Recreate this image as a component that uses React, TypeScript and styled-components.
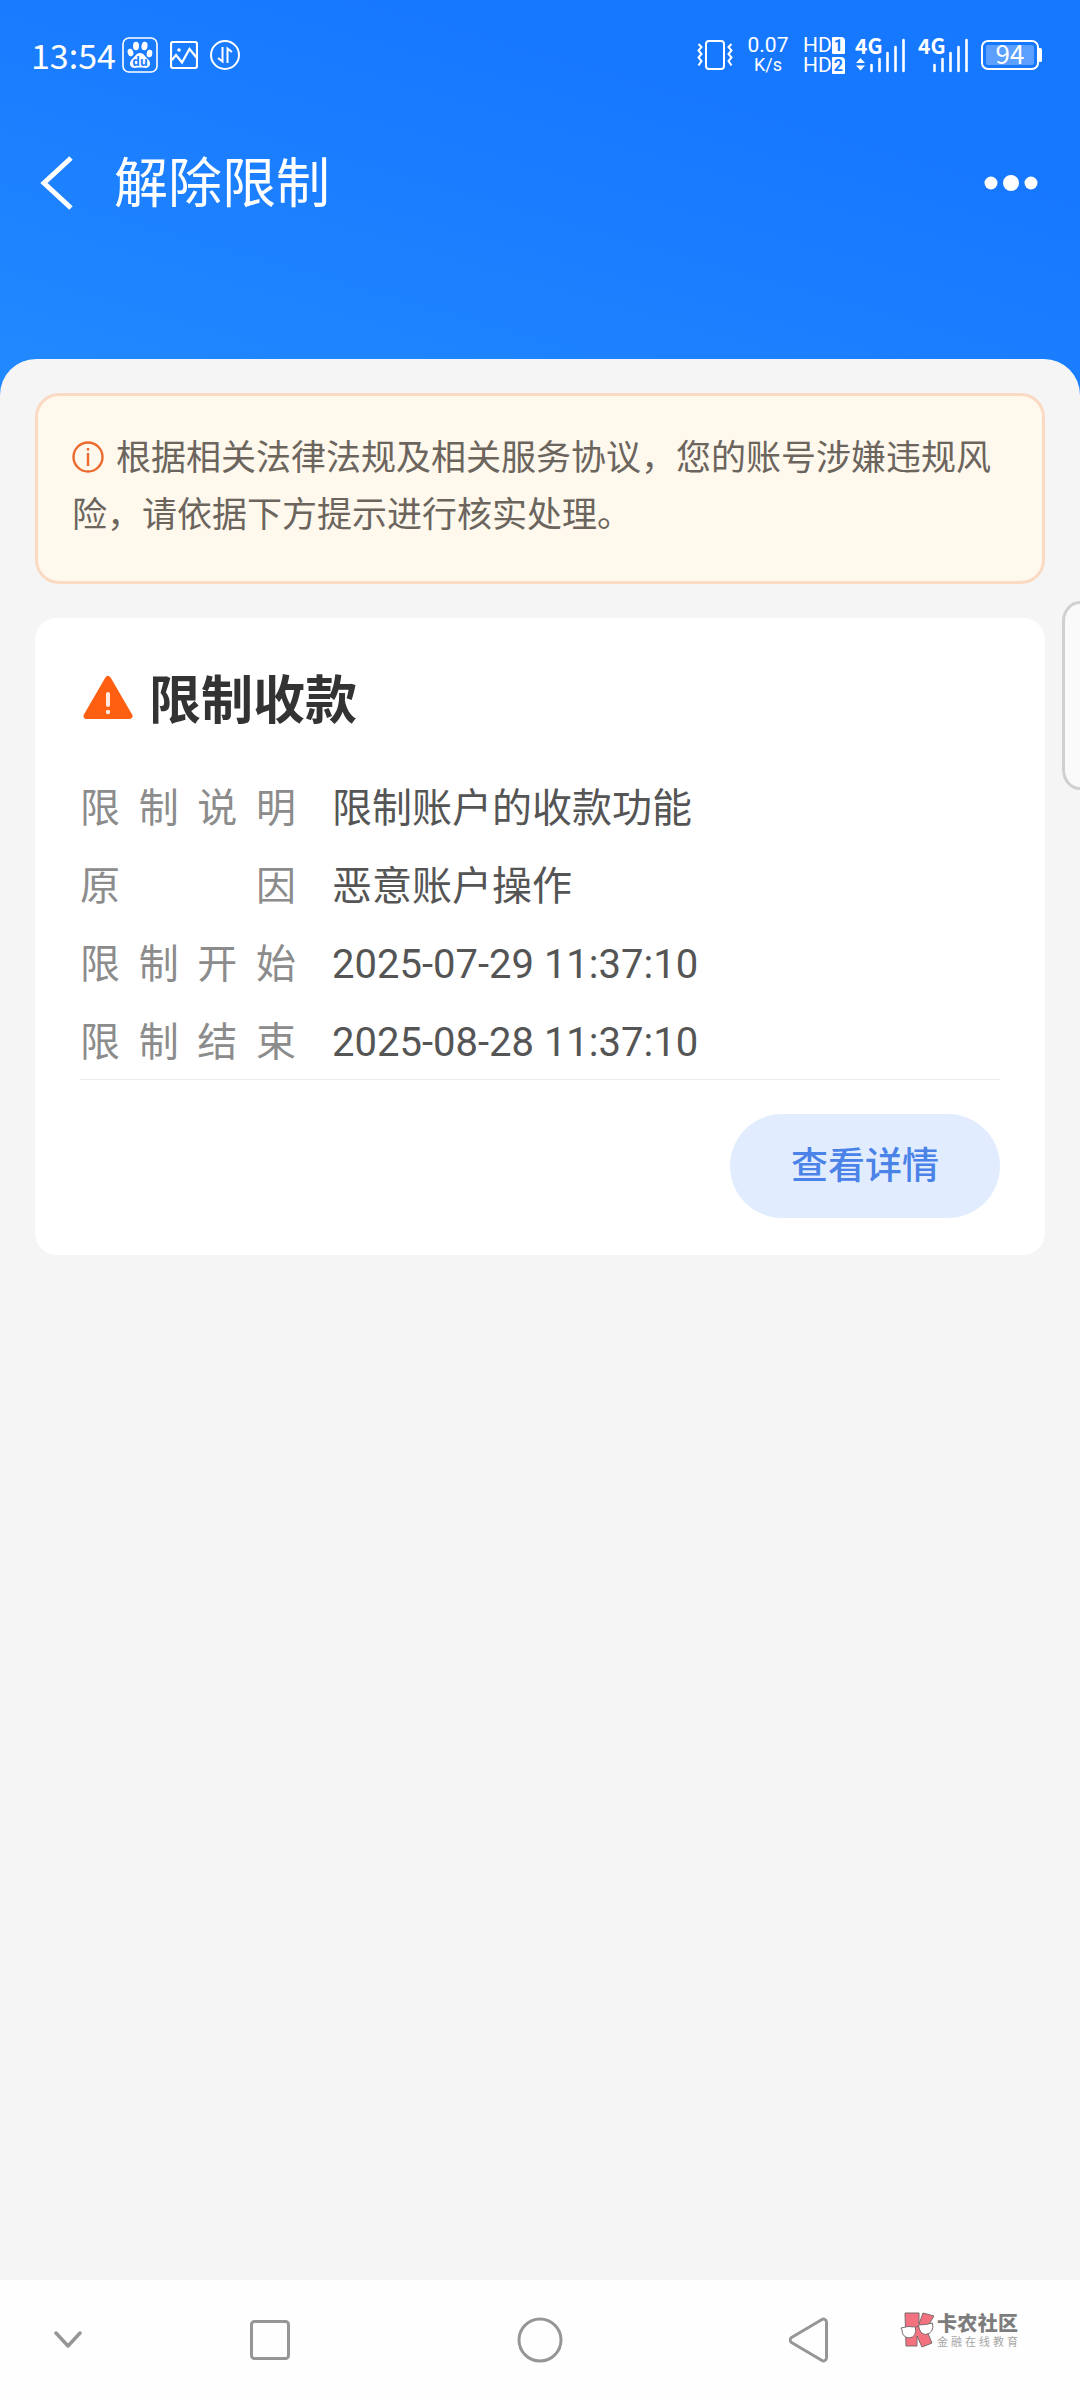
import React from "react";
import styled, { createGlobalStyle } from "styled-components";

const cjk = `"Noto Sans CJK SC", sans-serif`;

const GlobalStyle = createGlobalStyle`
  *, *::before, *::after { box-sizing: border-box; }
  body { margin: 0; font-family: Roboto, ${cjk}; background: #f5f5f5; }
  h1, h2, p, dl, dt, dd { margin: 0; }
  button { font: inherit; color: inherit; border: 0; padding: 0; background: none; cursor: pointer; }
  svg { display: block; flex: none; }
`;

const Page = styled.div`
  position: relative;
  display: flex;
  flex-direction: column;
  min-height: 100vh;
  overflow: hidden;
  background: #f5f5f5 linear-gradient(16deg, #228aff 0%, #1b7eff 45%, #1677ff 75%) no-repeat top / 100% 400px;
`;

const StatusBar = styled.div`
  display: flex;
  align-items: center;
  justify-content: space-between;
  height: 110px;
  padding: 0 38px 0 31px;
  color: #fff;
`;

const StatusGroup = styled.div<{ $gap: number }>`
  display: flex;
  align-items: center;
  gap: ${(p) => p.$gap}px;
`;

const Time = styled.span`
  font-family: ${cjk};
  font-size: 34px;
  line-height: 50px;
`;

const StatusStack = styled.div`
  display: grid;
  justify-items: center;
  min-width: 42px;
  font-size: 21px;
  line-height: 20px;
  white-space: nowrap;
`;

const SpeedUnit = styled.span`
  font-size: 18px;
`;

const HdRow = styled.div`
  display: flex;
  align-items: center;
  height: 20px;
`;

const SimBadge = styled.span`
  width: 13px;
  height: 17px;
  border-radius: 1px 4px 1px 1px;
  background: #fff;
  color: #1677ff;
  font-size: 16px;
  line-height: 17px;
  font-weight: 700;
  text-align: center;
`;

const AppBar = styled.header`
  display: flex;
  align-items: center;
  height: 146px;
  padding: 0 42px 0 40px;
  color: #fff;
`;

const IconButton = styled.button`
  display: flex;
  align-items: center;
  justify-content: center;
`;

const PageTitle = styled.h1`
  flex: 1;
  margin-left: 40px;
  padding-bottom: 6px;
  font-family: ${cjk};
  font-size: 54px;
  line-height: 72px;
  font-weight: 400;
`;

const Sheet = styled.main`
  flex: 1;
  display: flex;
  flex-direction: column;
  gap: 34px;
  margin-top: 103px;
  padding: 34px 35px;
  border-radius: 36px 36px 0 0;
  background: #f5f5f5;
`;

const Notice = styled.p`
  padding: 30px 34px 41px;
  border: 3px solid #fbdac4;
  border-radius: 24px;
  background: #fff8ec;
  color: #6b655e;
  font-family: ${cjk};
  font-size: 35px;
  line-height: 57px;
`;

const NoticeIcon = styled.svg`
  display: inline-block;
  margin-right: 12px;
  vertical-align: -3px;
`;

const Card = styled.section`
  padding: 41px 45px 37px;
  border-radius: 22px;
  background: #fff;
`;

const CardHead = styled.div`
  display: flex;
  align-items: center;
  gap: 16px;
  margin-bottom: 32px;
  padding-left: 3px;
`;

const CardTitle = styled.h2`
  color: #333;
  font-family: ${cjk};
  font-size: 52px;
  line-height: 76px;
  font-weight: 700;
`;

const Details = styled.dl`
  display: grid;
  grid-template-columns: 216px 1fr;
  grid-auto-rows: 78px;
  column-gap: 36px;
  border-bottom: 1px solid #ededed;
  font-size: 40px;
  line-height: 83px;
`;

const Label = styled.dt`
  color: #8c8c8c;
  text-align: justify;
  text-align-last: justify;
`;

const Value = styled.dd`
  color: #555;
`;

const CardFoot = styled.div`
  display: flex;
  justify-content: flex-end;
  margin-top: 34px;
`;

const DetailButton = styled.button`
  padding: 0 61px 6px;
  border-radius: 52px;
  background: #e1edff;
  color: #4a82e8;
  font-family: ${cjk};
  font-size: 37px;
  font-weight: 500;
  line-height: 98px;
`;

const EdgeHandle = styled.div`
  position: absolute;
  top: 601px;
  right: 0;
  width: 18px;
  height: 189px;
  border: 3px solid #d0d0d0;
  border-right: 0;
  border-radius: 30px 0 0 30px / 34px 0 0 34px;
  background: #fafafa;
`;

const SystemNav = styled.nav`
  position: relative;
  display: grid;
  grid-template-columns: 1fr 2fr 2fr 2fr 1fr;
  height: 120px;
  background: #fefefe;
  color: #969696;
`;

const Watermark = styled.div`
  position: absolute;
  right: 62px;
  top: 32px;
  display: flex;
  align-items: center;
  gap: 3px;
`;

const WatermarkText = styled.div`
  width: 81px;
  font-family: ${cjk};
  text-align-last: justify;
`;

const WatermarkName = styled.div`
  color: #7d7d7d;
  font-size: 20px;
  line-height: 22px;
  font-weight: 900;
`;

const WatermarkTag = styled.div`
  color: #a6a6a6;
  font-size: 11px;
  line-height: 14px;
`;

const BaiduIcon = () => (
  <svg width="36" height="36" viewBox="0 0 36 36">
    <rect x="1" y="1" width="34" height="34" rx="6" fill="none" stroke="#fff" strokeWidth="1.6" />
    <g fill="#fff">
      <ellipse cx="14" cy="9" rx="3" ry="4.2" />
      <ellipse cx="22.5" cy="9" rx="3" ry="4.2" transform="rotate(8 22.5 9)" />
      <ellipse cx="8.5" cy="15.5" rx="2.8" ry="3.8" transform="rotate(-15 8.5 15.5)" />
      <ellipse cx="27.5" cy="16.5" rx="2.8" ry="3.8" transform="rotate(10 27.5 16.5)" />
      <path d="M18 16c3.500 0 4.500 3 7 5.200 2 1.800 3.500 3.600 3 6-.6 3-3 4-6 3.600-3-.4-5-.4-8 0-3 .4-5.600-.6-6-3.600-.3-2.400 1.200-4.200 3-6C13.500 19 14.500 16 18 16z" />
    </g>
    <text x="18" y="29" textAnchor="middle" fontFamily="Noto Sans, sans-serif" fontSize="12" fontWeight="700" fill="#1b7eff">du</text>
  </svg>
);

const PictureIcon = () => (
  <svg width="28" height="28" viewBox="0 0 28 28" fill="none" stroke="#fff" strokeWidth="2.200">
    <rect x="1" y="1" width="26" height="26" rx="2" />
    <path d="M2 19l4-5 6 7.500L19.500 8l7 8.500" />
    <circle cx="9" cy="9" r="1.800" fill="#fff" stroke="none" />
  </svg>
);

const TransferIcon = () => (
  <svg width="30" height="30" viewBox="0 0 30 30" fill="none" stroke="#fff" strokeWidth="2">
    <circle cx="15" cy="15" r="14" />
    <path d="M12.500 7v14.500L8 18M17.500 23V8.500L22 12" />
  </svg>
);

const VibrateIcon = () => (
  <svg width="36" height="30" viewBox="0 0 36 30" fill="none" stroke="#fff" strokeWidth="2">
    <rect x="9" y="1" width="18" height="28" rx="3" />
    <path d="M1.500 4l3 3-3 3.500 3 3.500-3 3.500 3 3.500-3 4.500M34.500 4l-3 3 3 3.500-3 3.500 3 3.500-3 3.500 3 4.500" />
  </svg>
);

const SignalIcon = ({ data = false }: { data?: boolean }) => (
  <svg width="51" height="52" viewBox="0 -8 51 52">
    <text x="0" y="17" fontFamily="Noto Sans CJK SC, sans-serif" fontSize="21" fontWeight="700" fill="#fff">4G</text>
    {data && <path d="M1 26l4.500-5 4.500 5zM1 28.500l4.500 5 4.500-5z" fill="#fff" />}
    <path d="M16.500 34v-6M24.500 34V22M32.500 34V16M40.500 34V10M48.500 34V3" stroke="#fff" strokeWidth="2.600" strokeLinecap="round" />
  </svg>
);

const BatteryIcon = () => (
  <svg width="61" height="42" viewBox="0 -6 61 42">
    <rect x="1" y="1" width="56" height="28" rx="6" fill="none" stroke="#fff" strokeWidth="2" />
    <rect x="5" y="5" width="48" height="20" rx="2" fill="#fff" fillOpacity=".3" />
    <path d="M58 8h1.500a1.500 1.500 0 0 1 1.500 1.500v11a1.500 1.500 0 0 1-1.500 1.500H58z" fill="#fff" />
    <text x="29" y="24" textAnchor="middle" fontFamily="Noto Sans CJK SC, sans-serif" fontSize="26" fill="#fff">94</text>
  </svg>
);

const LogoIcon = () => (
  <svg width="34" height="36" viewBox="0 0 34 36" stroke="#7a6a6c" strokeWidth="1">
    <path d="M5 1h14v11l4-11 11 3-8 13 6 14-10 4-5-11v10H6z" fill="#f4727f" />
    <path d="M1 16q7-2.500 14.500-1Q17 25 9 26 2 25 2 18zM18.500 13q7 0 14-2 2 10-7 11.500-6-.5-7-9.500z" fill="#fff" />
    <path d="M15.500 16q1-2 3-2" fill="none" />
  </svg>
);

const details = [
  ["限制说明", "限制账户的收款功能"],
  ["原因", "恶意账户操作"],
  ["限制开始", "2025-07-29 11:37:10"],
  ["限制结束", "2025-08-28 11:37:10"],
];

export default function App() {
  return (
    <Page>
      <GlobalStyle />
      <StatusBar>
        <StatusGroup $gap={12}>
          <StatusGroup $gap={6}>
            <Time>13:54</Time>
            <BaiduIcon />
          </StatusGroup>
          <PictureIcon />
          <TransferIcon />
        </StatusGroup>
        <StatusGroup $gap={14}>
          <VibrateIcon />
          <StatusStack>
            <span>0.07</span>
            <SpeedUnit>K/s</SpeedUnit>
          </StatusStack>
          <StatusGroup $gap={10}>
            <StatusStack>
              <HdRow>HD<SimBadge>1</SimBadge></HdRow>
              <HdRow>HD<SimBadge>2</SimBadge></HdRow>
            </StatusStack>
            <StatusGroup $gap={12}>
              <SignalIcon data />
              <SignalIcon />
              <BatteryIcon />
            </StatusGroup>
          </StatusGroup>
        </StatusGroup>
      </StatusBar>

      <AppBar>
        <IconButton type="button" aria-label="返回">
          <svg width="34" height="54" viewBox="0 0 34 54" fill="none" stroke="#fff" strokeWidth="5">
            <path d="M31 2L4 27l27 25" />
          </svg>
        </IconButton>
        <PageTitle>解除限制</PageTitle>
        <IconButton type="button" aria-label="更多">
          <svg width="54" height="18" viewBox="0 0 54 18" fill="#fff">
            <circle cx="7" cy="9" r="6.500" />
            <circle cx="27" cy="9" r="8" />
            <circle cx="47" cy="9" r="6.500" />
          </svg>
        </IconButton>
      </AppBar>

      <Sheet>
        <Notice>
          <NoticeIcon width="32" height="32" viewBox="0 0 32 32" fill="none" stroke="#ec6a2c" strokeWidth="2.400">
            <circle cx="16" cy="16" r="14.500" />
            <path d="M16 12v13M16 7v2.500" />
          </NoticeIcon>
          根据相关法律法规及相关服务协议，您的账号涉嫌违规风险，请依据下方提示进行核实处理。
        </Notice>

        <Card>
          <CardHead>
            <svg width="50" height="44" viewBox="0 0 50 44">
              <path d="M25 4L46.500 41h-43z" fill="#ff5f10" stroke="#ff5f10" strokeWidth="6" strokeLinejoin="round" />
              <path d="M25 19v11" stroke="#ffeadf" strokeWidth="4" strokeLinecap="round" />
              <circle cx="25" cy="37" r="2.200" fill="#ffeadf" />
            </svg>
            <CardTitle>限制收款</CardTitle>
          </CardHead>
          <Details>
            {details.map(([label, value]) => (
              <React.Fragment key={label}>
                <Label>{label}</Label>
                <Value>{value}</Value>
              </React.Fragment>
            ))}
          </Details>
          <CardFoot>
            <DetailButton type="button">查看详情</DetailButton>
          </CardFoot>
        </Card>
      </Sheet>

      <SystemNav>
        <IconButton type="button" aria-label="收起">
          <svg width="28" height="18" viewBox="0 0 28 18" fill="none" stroke="currentColor" strokeWidth="3.500" strokeLinecap="round" strokeLinejoin="round">
            <path d="M2 2l12 13L26 2" />
          </svg>
        </IconButton>
        <IconButton type="button" aria-label="最近任务">
          <svg width="40" height="40" viewBox="0 0 40 40" fill="none" stroke="currentColor" strokeWidth="3">
            <rect x="1.500" y="1.500" width="37" height="37" rx="3" />
          </svg>
        </IconButton>
        <IconButton type="button" aria-label="主页">
          <svg width="46" height="46" viewBox="0 0 46 46" fill="none" stroke="currentColor" strokeWidth="3">
            <circle cx="23" cy="23" r="21" />
          </svg>
        </IconButton>
        <IconButton type="button" aria-label="后退">
          <svg width="42" height="46" viewBox="0 0 42 46" fill="none" stroke="currentColor" strokeWidth="3" strokeLinejoin="round">
            <path d="M33 2.500L2.500 20.500a3 3 0 0 0 0 5L33 43.500a3 3 0 0 0 4.500-2.500V5A3 3 0 0 0 33 2.500z" />
          </svg>
        </IconButton>
        <Watermark>
          <LogoIcon />
          <WatermarkText>
            <WatermarkName>卡农社区</WatermarkName>
            <WatermarkTag>金融在线教育</WatermarkTag>
          </WatermarkText>
        </Watermark>
      </SystemNav>

      <EdgeHandle />
    </Page>
  );
}
